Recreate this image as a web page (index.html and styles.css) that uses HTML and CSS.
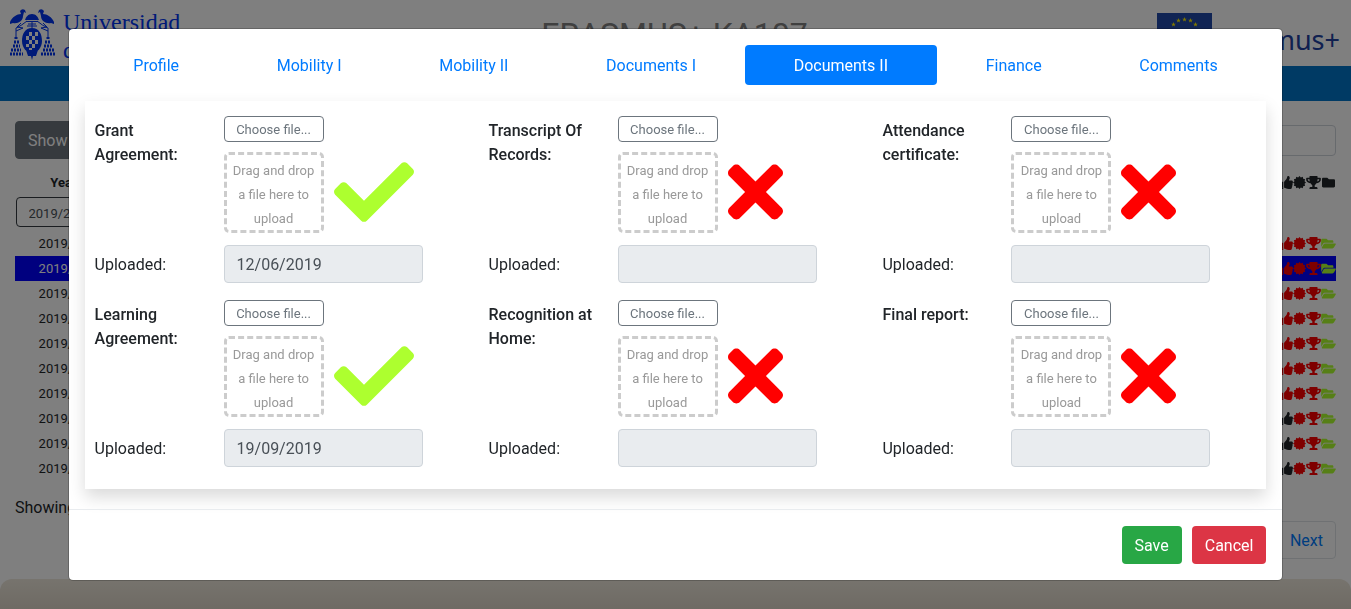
FILE: index.html
```
<!DOCTYPE html>
<html lang="en">
<head>
<meta charset="utf-8">
<meta name="viewport" content="width=device-width, initial-scale=1">
<title>Erasmus+ KA107</title>
<link rel="stylesheet" href="styles.css">
</head>
<body>
<svg class="sprite" aria-hidden="true">
  <symbol id="check" viewBox="0 0 512 512"><path d="M173.898 439.404l-166.4-166.4c-9.997-9.997-9.997-26.206 0-36.204l36.203-36.204c9.997-9.998 26.207-9.998 36.204 0L192 312.69 432.095 72.596c9.997-9.997 26.207-9.997 36.204 0l36.203 36.204c9.997 9.997 9.997 26.206 0 36.204l-294.4 294.401c-9.998 9.997-26.207 9.997-36.204-.001z"/></symbol>
  <symbol id="times" viewBox="0 0 352 512"><path d="M242.72 256l100.07-100.07c12.28-12.28 12.28-32.19 0-44.48l-22.24-22.24c-12.28-12.28-32.19-12.28-44.48 0L176 189.28 75.93 89.21c-12.28-12.28-32.19-12.28-44.48 0L9.21 111.45c-12.28 12.28-12.28 32.19 0 44.48L109.28 256 9.21 356.07c-12.28 12.28-12.28 32.19 0 44.48l22.24 22.24c12.28 12.28 32.2 12.28 44.48 0L176 322.72l100.07 100.07c12.28 12.28 32.2 12.28 44.48 0l22.24-22.24c12.28-12.28 12.28-32.19 0-44.48L242.72 256z"/></symbol>
  <symbol id="thumb" viewBox="0 0 512 512"><path d="M104 224H24c-13.255 0-24 10.745-24 24v240c0 13.255 10.745 24 24 24h80c13.255 0 24-10.745 24-24V248c0-13.255-10.745-24-24-24zM64 472c-13.255 0-24-10.745-24-24s10.745-24 24-24 24 10.745 24 24-10.745 24-24 24zM384 81.452c0 42.416-25.97 66.208-33.277 94.548h101.723c33.397 0 59.397 27.746 59.553 58.098.084 17.938-7.546 37.249-19.439 49.197l-.11.11c9.836 23.337 8.237 56.037-9.308 79.469 8.681 25.895-.069 57.704-16.382 74.757 4.298 17.598 2.244 32.575-6.148 44.632C440.202 511.587 389.616 512 346.839 512l-2.845-.001c-48.287-.017-87.806-17.598-119.56-31.725-15.957-7.099-36.821-15.887-52.651-16.178-6.54-.12-11.783-5.457-11.783-11.998v-213.77c0-3.2 1.282-6.271 3.558-8.521 39.614-39.144 56.648-80.587 89.117-113.111 14.804-14.832 20.188-37.236 25.393-58.902C282.515 39.293 291.817 0 312 0c24 0 72 8 72 81.452z"/></symbol>
  <symbol id="badge" viewBox="0 0 512 512"><path d="M512 256L454 309 478 384 401 401 384 478 309 454 256 512 203 454 128 478 111 401 34 384 58 309 0 256 58 203 34 128 111 111 128 34 203 58 256 0 309 58 384 34 401 111 478 128 454 203z"/></symbol>
  <symbol id="trophy" viewBox="0 0 576 512"><path d="M552 64H448V24c0-13.3-10.7-24-24-24H152c-13.3 0-24 10.7-24 24v40H24C10.7 64 0 74.7 0 88v56c0 35.7 22.5 72.4 61.9 100.7 31.5 22.7 69.8 37.1 110 41.7C203.3 338.5 240 360 240 360v72h-48c-35.3 0-64 20.7-64 56v12c0 6.6 5.4 12 12 12h296c6.6 0 12-5.4 12-12v-12c0-35.3-28.7-56-64-56h-48v-72s36.7-21.5 68.1-73.6c40.3-4.6 78.6-19 110-41.7 39.3-28.3 61.9-65 61.9-100.7V88c0-13.3-10.7-24-24-24zM99.3 192.8C74.9 175.2 64 155.6 64 144v-16h64.2c1 32.6 5.8 61.2 12.8 86.2-15.1-5.2-29.2-12.4-41.7-21.4zM512 144c0 16.1-17.7 36.1-35.3 48.8-12.5 9-26.7 16.2-41.8 21.4 7-25 11.8-53.6 12.8-86.2H512v16z"/></symbol>
  <symbol id="folder" viewBox="0 0 512 512"><path d="M464 128H272l-64-64H48C21.49 64 0 85.49 0 112v288c0 26.51 21.49 48 48 48h416c26.51 0 48-21.49 48-48V176c0-26.51-21.49-48-48-48z"/></symbol>
  <symbol id="folder-open" viewBox="0 0 576 512"><path d="M572.694 292.093L500.27 416.248A63.997 63.997 0 0 1 444.989 448H45.025c-18.523 0-30.064-20.093-20.731-36.093l72.424-124.155A64 64 0 0 1 152 256h399.964c18.523 0 30.064 20.093 20.73 36.093zM152 224h328v-48c0-26.51-21.49-48-48-48H272l-64-64H48C21.49 64 0 85.49 0 112v278.046l69.077-118.418C86.214 242.25 117.989 224 152 224z"/></symbol>
  <symbol id="star" viewBox="-5 -5 10 10"><path d="M0-5L1.2-1.6 4.8-1.5 1.9.6 2.9 4 0 2 -2.9 4 -1.9.6 -4.8-1.5 -1.2-1.6z"/></symbol>
</svg>

<div class="page">
  <header class="site-header">
    <div class="university">
      <svg class="crest" viewBox="0 0 46 52" aria-hidden="true">
        <path d="M1 14C3 9 8 6 12 6L11 3Q13 0 16 2L17 5 15 4 14 8C14 13 9 16 4 15L1 16zM45 14C43 9 38 6 34 6L35 3Q33 0 30 2L29 5 31 4 32 8C32 13 37 16 42 15L45 16z"/>
        <path d="M23 6c4 0 6 3 7 6H16c1-3 3-6 7-6zM17 13h12v1H17z"/>
        <path class="crest-line" d="M12 15L8 19 14 20 7 23 M34 15L38 19 32 20 39 23 M23 13V20 M19 16H27 M18 18H28 M18 13Q12 18 7 20V29 M28 13Q34 18 39 20V29"/>
        <path d="M23 20c7 0 10 6 10 13s-5 12-10 12-10-5-10-12 3-13 10-13zM17 42h12l-2 6h-3l-1 4-1-4h-3z"/>
        <path class="crest-hole" d="M20 24h3v4h-3zM26 24h3v4h-3zM17 28h3v4h-3zM23 28h3v4h-3zM20 32h3v4h-3zM26 32h3v4h-3zM17 36h3v3h-3zM23 36h3v4h-3zM20 40h3v2h-3z"/>
        <path class="crest-beads" d="M7 29V32 M5 34H10 M4 38H11 M2 42H12 M1 46H14 M39 29V32 M36 34H42 M35 38H43 M34 42H45 M32 46H46"/>
      </svg>
      <div class="university-name">Universidad<br>de Alcalá</div>
    </div>
    <h1 class="site-title">ERASMUS+ KA107</h1>
    <div class="programme">
      <svg class="flag" viewBox="0 0 55 37" aria-hidden="true">
        <rect width="55" height="37"/>
        <g class="stars">
          <use href="#star" x="25" y="4" width="5" height="5"/><use href="#star" x="31" y="5" width="5" height="5"/><use href="#star" x="36" y="9" width="5" height="5"/>
          <use href="#star" x="19" y="5" width="5" height="5"/><use href="#star" x="14" y="9" width="5" height="5"/><use href="#star" x="12" y="16" width="5" height="5"/>
          <use href="#star" x="38" y="16" width="5" height="5"/><use href="#star" x="36" y="22" width="5" height="5"/><use href="#star" x="14" y="22" width="5" height="5"/>
          <use href="#star" x="19" y="27" width="5" height="5"/><use href="#star" x="31" y="27" width="5" height="5"/><use href="#star" x="25" y="29" width="5" height="5"/>
        </g>
      </svg>
      <span>Erasmus+</span>
    </div>
  </header>
  <div class="navbar"></div>

  <main class="content">
    <div class="toolbar">
      <button class="btn show-btn" type="button">Show rows</button>
      <input class="search" type="search" aria-label="Search">
    </div>
    <table class="records">
      <thead>
        <tr><th class="year-head">Year</th><th class="icons"><svg class="w16"><use href="#thumb"/></svg><svg class="w16"><use href="#badge"/></svg><svg class="w18"><use href="#trophy"/></svg><svg class="w18"><use href="#folder"/></svg></th></tr>
        <tr class="filters"><td><select aria-label="Year"><option>2019/2020</option></select></td><td></td></tr>
      </thead>
      <tbody id="rows"></tbody>
    </table>
    <div class="table-info">Showing 1 to 10</div>
    <div class="pager"><a href="#next">Next</a></div>
  </main>
  <footer class="site-footer"></footer>
</div>

<div class="backdrop"></div>
<div class="modal" role="dialog" aria-modal="true" aria-label="Record">
  <div class="modal-body">
    <nav class="tabs">
      <a href="#profile">Profile</a><a href="#mobility1">Mobility I</a><a href="#mobility2">Mobility II</a><a href="#documents1">Documents I</a><a class="active" href="#documents2">Documents II</a><a href="#finance">Finance</a><a href="#comments">Comments</a>
    </nav>
    <form class="panel" id="documents">
      <section class="doc">
        <span class="doc-title">Grant Agreement:</span>
        <div class="upload"><button class="choose" type="button">Choose file...</button><div class="drop">Drag and drop a file here to upload</div><svg class="ok"><use href="#check"/></svg></div>
        <label for="d1">Uploaded:</label><input id="d1" value="12/06/2019" readonly>
      </section>
      <section class="doc">
        <span class="doc-title">Transcript Of Records:</span>
        <div class="upload"><button class="choose" type="button">Choose file...</button><div class="drop">Drag and drop a file here to upload</div><svg class="missing"><use href="#times"/></svg></div>
        <label for="d2">Uploaded:</label><input id="d2" readonly>
      </section>
      <section class="doc">
        <span class="doc-title">Attendance certificate:</span>
        <div class="upload"><button class="choose" type="button">Choose file...</button><div class="drop">Drag and drop a file here to upload</div><svg class="missing"><use href="#times"/></svg></div>
        <label for="d3">Uploaded:</label><input id="d3" readonly>
      </section>
      <section class="doc">
        <span class="doc-title">Learning Agreement:</span>
        <div class="upload"><button class="choose" type="button">Choose file...</button><div class="drop">Drag and drop a file here to upload</div><svg class="ok"><use href="#check"/></svg></div>
        <label for="d4">Uploaded:</label><input id="d4" value="19/09/2019" readonly>
      </section>
      <section class="doc">
        <span class="doc-title">Recognition at Home:</span>
        <div class="upload"><button class="choose" type="button">Choose file...</button><div class="drop">Drag and drop a file here to upload</div><svg class="missing"><use href="#times"/></svg></div>
        <label for="d5">Uploaded:</label><input id="d5" readonly>
      </section>
      <section class="doc">
        <span class="doc-title">Final report:</span>
        <div class="upload"><button class="choose" type="button">Choose file...</button><div class="drop">Drag and drop a file here to upload</div><svg class="missing"><use href="#times"/></svg></div>
        <label for="d6">Uploaded:</label><input id="d6" readonly>
      </section>
    </form>
  </div>
  <div class="modal-footer">
    <button class="btn save" type="submit" form="documents">Save</button>
    <button class="btn cancel" type="button">Cancel</button>
  </div>
</div>
<script src="rows.js"></script>
</body>
</html>
```
FILE: rows.js
```
const icon = (name, size, color) =>
  `<svg class="${size} ${color}"><use href="#${name}"/></svg>`;

document.getElementById("rows").innerHTML = Array.from({ length: 10 }, (_, i) =>
  `<tr${i === 1 ? ' class="selected"' : ""}><td>2019/2020</td><td class="icons">` +
  icon("thumb", "w16", i < 7 ? "red" : "dark") +
  icon("badge", "w16", "red") +
  icon("trophy", "w18", "red") +
  icon("folder-open", "w18", "green") +
  "</td></tr>"
).join("");
```
FILE: styles.css
```
* { box-sizing: border-box; }
body {
  margin: 0;
  overflow: hidden;
  font: 16px/24px Roboto, "Liberation Sans", sans-serif;
  color: #212529;
  background: #fff;
}
button, input, select { font: inherit; color: inherit; margin: 0; }
a { color: #007bff; text-decoration: none; }
svg { fill: currentColor; }
.sprite { display: none; }

.page { display: flex; flex-direction: column; min-height: 100vh; }
.site-header {
  display: grid;
  grid-template-columns: 1fr auto 1fr;
  align-items: start;
  height: 66px;
  padding: 8px 11px 0 9px;
}
.university { display: flex; gap: 8px; color: #0034f0; }
.crest { width: 46px; height: 52px; }
.crest-line { fill: none; stroke: currentColor; stroke-width: 1; }
.crest-hole { fill: #fff; }
.crest-beads { fill: none; stroke: currentColor; stroke-width: 3; stroke-dasharray: 2 1; }
.university-name { font: 24px/28px "Liberation Serif", serif; }
.site-title {
  margin: 8px 0 0;
  font-weight: 400;
  font-size: 32px;
  line-height: 36px;
  color: #808080;
}
.programme {
  display: flex;
  justify-content: flex-end;
  gap: 4px;
  padding-top: 5px;
  font: 27px/54px "Noto Sans", sans-serif;
  color: #2040a0;
}
.flag { width: 55px; height: 37px; fill: #2048a8; }
.stars { fill: #ffee00; }
.navbar { height: 35px; background: #0074c8; }

.content { padding: 20px 15px; }
.toolbar { display: flex; justify-content: space-between; align-items: center; }
.btn {
  padding: 7px 12px 5px;
  border: 1px solid transparent;
  border-radius: 4px;
  color: #fff;
}
.show-btn { background: #6c757d; border-color: #6c757d; }
.search {
  width: 200px;
  height: 31px;
  border: 1px solid #ced4da;
  border-radius: 4px;
  background: #fff;
}
.records {
  width: 100%;
  margin-top: 11px;
  border-collapse: collapse;
  font-size: 13px;
  line-height: 25px;
  text-align: center;
}
.records th, .records td { height: 25px; padding: 0; }
.records tr > :first-child { width: 111px; }
.records .year-head { padding-right: 14px; }
.records .filters td { height: 36px; padding-bottom: 2px; line-height: 0; }
.filters select {
  width: 110px;
  height: 30px;
  padding: 2px 8px 0;
  border: 1px solid #343a40;
  border-radius: 4px;
  background: #fff;
  color: #495057;
}
.records .icons { text-align: right; line-height: 0; }
.w16 { width: 13px; height: 13px; }
.w18 { width: 15px; height: 13px; }
.icons svg { vertical-align: middle; }
.red { color: #f00; }
.green { color: #adff2f; }
.dark { color: #212529; }
.selected { background: #00f; }
.selected td { color: #fff; }
.table-info { padding-top: 15px; }
.pager { display: flex; justify-content: flex-end; padding-top: 1px; }
.pager a { padding: 7px 12px 5px; border: 1px solid #dee2e6; border-radius: 0 4px 4px 0; }
.site-footer {
  flex: 1;
  min-height: 30px;
  border-radius: 12px 12px 0 0;
  background: linear-gradient(#eee8dc, #ddd5c8);
}

.backdrop { position: fixed; inset: 0; background: rgba(0, 0, 0, .5); }
.modal {
  position: absolute;
  top: 28px;
  left: 5%;
  right: 5%;
  border: 1px solid rgba(0, 0, 0, .2);
  border-radius: 5px;
  background: #fff;
  background-clip: padding-box;
}
.modal-body { padding: 16px 16px 20px; }
.tabs { display: flex; margin-bottom: 16px; }
.tabs a { flex: 1 1 auto; padding: 9px 16px 7px; border-radius: 4px; text-align: center; }
.tabs .active { background: #007bff; color: #fff; }
.panel {
  display: grid;
  grid-template-columns: repeat(3, 1fr);
  row-gap: 17px;
  padding: 15px 0 22px;
  box-shadow: 0 8px 16px rgba(0, 0, 0, .15);
}
.doc {
  display: grid;
  grid-template-columns: 119px 199px;
  gap: 12px 10px;
  align-content: start;
  padding-left: 10px;
}
.doc-title { padding-top: 3px; font-weight: 500; }
.upload {
  display: grid;
  grid-template-columns: 100px auto;
  gap: 10px;
  justify-content: start;
}
.choose {
  grid-column: 1 / -1;
  width: 100px;
  height: 26px;
  padding: 1px 0 0;
  border: 1px solid #6c757d;
  border-radius: 4px;
  background: #fff;
  color: #6c757d;
  font-size: 13px;
}
.drop {
  height: 81px;
  padding: 4px 4px 0;
  border: 3px dashed #ccc;
  border-radius: 5px;
  color: #999;
  font-size: 13px;
  line-height: 24px;
  text-align: center;
  white-space: normal;
}
.upload { grid-template-rows: 26px 81px; }
.ok { width: 80px; height: 80px; color: #adff2f; }
.missing { width: 55px; height: 80px; color: #f00; }
.doc label { padding-top: 8px; }
.doc input {
  min-width: 0;
  height: 38px;
  padding: 6px 12px;
  border: 1px solid #ced4da;
  border-radius: 4px;
  background: #e9ecef;
  color: #495057;
}
.modal-footer {
  display: flex;
  justify-content: flex-end;
  gap: 10px;
  padding: 16px;
  border-top: 1px solid #e9ecef;
}
.save { background: #28a745; }
.cancel { background: #dc3545; }
```
